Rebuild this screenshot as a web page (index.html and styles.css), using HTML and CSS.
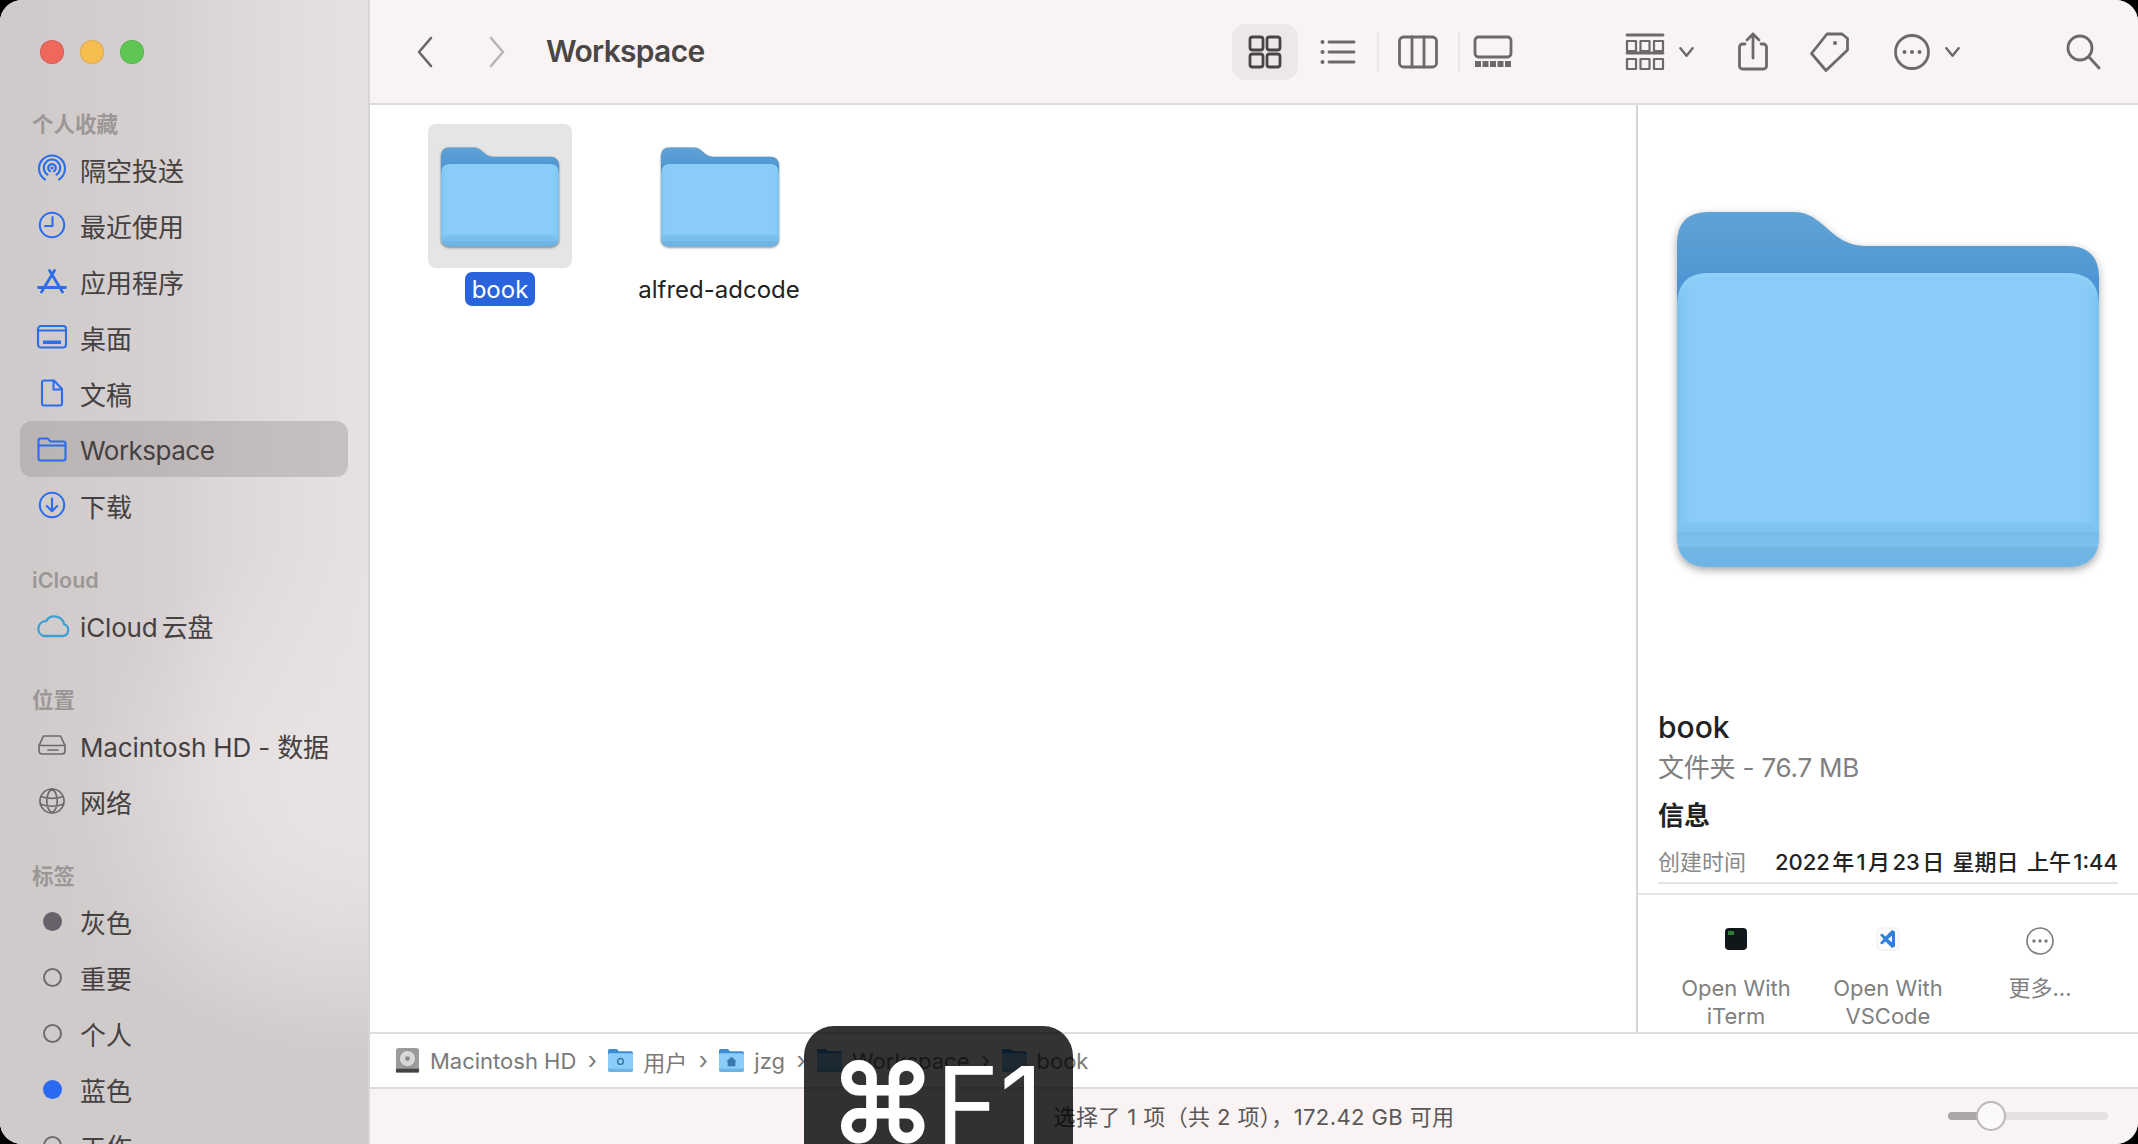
FILE: index.html
```html
<!DOCTYPE html>
<html lang="zh-CN">
<head>
<meta charset="utf-8">
<title>Workspace</title>
<link rel="stylesheet" href="styles.css">
</head>
<body>
<svg class="defs" aria-hidden="true">
  <defs>
    <linearGradient id="fb" x1="0" y1="0" x2="0" y2="1"><stop offset="0" stop-color="#5fa2d6"/><stop offset=".55" stop-color="#5199d3"/><stop offset="1" stop-color="#3a83cd"/></linearGradient>
    <linearGradient id="ff" x1="0" y1="0" x2="1" y2="0"><stop offset="0" stop-color="#7cc3f1"/><stop offset=".03" stop-color="#88ccf7"/><stop offset=".97" stop-color="#88ccf7"/><stop offset="1" stop-color="#7cc3f1"/></linearGradient>
    <linearGradient id="fl" x1="0" y1="0" x2="0" y2="1"><stop offset="0" stop-color="#80c5f0"/><stop offset=".2" stop-color="#7fc4ef"/><stop offset=".22" stop-color="#78bdea"/><stop offset=".52" stop-color="#7cc1ec"/><stop offset=".58" stop-color="#70b6e5"/><stop offset="1" stop-color="#6eb4e4"/></linearGradient>
    <symbol id="folder" viewBox="0 0 422 356">
      <path fill="url(#fb)" d="M0 110V32Q0 0 32 0H118C146 0 154 34 188 34H390Q422 34 422 66V110Z"/>
      <path fill="url(#ff)" d="M0 355V93Q0 61 32 61H390Q422 61 422 93V324Q422 355 390 355H32Q0 355 0 324Z"/>
      <path fill="#93d1f8" d="M2 88Q4 61 32 61H390Q418 61 420 88Q416 65 390 65H32Q6 65 2 88Z" opacity=".7"/>
      <path fill="url(#fl)" d="M0 311H422V324Q422 355 390 355H32Q0 355 0 324Z"/>
    </symbol>
    <symbol id="mini" viewBox="0 0 26 24">
      <path fill="#3f8bd2" d="M0 6V2Q0 0 2 0H9L11.500 2.500H24Q26 2.500 26 4.500V8H0Z"/>
      <path fill="#8acdf8" d="M0 22V6Q0 4.500 2 4.500H24Q26 4.500 26 6V22Q26 24 24 24H2Q0 24 0 22Z"/>
      <path fill="#6db3e3" d="M0 20.500H26V22Q26 24 24 24H2Q0 24 0 22Z"/>
    </symbol>
  </defs>
</svg>

<div class="window">
  <aside class="sidebar">
    <div class="lights"><i class="light red"></i><i class="light yellow"></i><i class="light green"></i></div>

    <section class="side-group first">
      <h2 class="side-head">个人收藏</h2>
      <div class="side-row"><svg class="ic blue" viewBox="0 0 30 30"><path d="M8 25.500A13 13 0 1 1 22 25.500M10.500 20.600A8.200 8.200 0 1 1 19.500 20.600M13 17.200A3.800 3.800 0 1 1 17 17.200"/><circle class="fill" cx="15" cy="14" r="1.600"/></svg><span>隔空投送</span></div>
      <div class="side-row"><svg class="ic blue" viewBox="0 0 30 30"><circle cx="15" cy="15" r="12.200"/><path d="M15.500 7V16H8"/></svg><span>最近使用</span></div>
      <div class="side-row"><svg class="ic blue thick" viewBox="0 0 30 30"><path d="M12.500 4.500L25.500 26M17.500 4.500L4.500 26M1.500 21.500H28.500"/></svg><span>应用程序</span></div>
      <div class="side-row"><svg class="ic blue" viewBox="0 0 30 30"><rect x="1" y="4" width="28" height="21.500" rx="3"/><rect class="fill" x="6" y="18.500" width="18" height="3.500"/><path d="M1 8.500H29"/></svg><span>桌面</span></div>
      <div class="side-row"><svg class="ic blue" viewBox="0 0 30 30"><path d="M7 2.500H17L25 11V25.500A2 2 0 0 1 23 27.500H7A2 2 0 0 1 5 25.500V4.500A2 2 0 0 1 7 2.500ZM16.500 3V11.500H25"/></svg><span>文稿</span></div>
      <div class="side-row selected"><svg class="ic blue" viewBox="0 0 30 30"><path d="M1.500 9V6.500A2 2 0 0 1 3.500 4.500H10.500L13.500 7.500H26.500A2 2 0 0 1 28.500 9.500V24.500A2 2 0 0 1 26.500 26.500H3.500A2 2 0 0 1 1.500 24.500ZM1.500 11.500H28.500"/></svg><span class="tight">Workspace</span></div>
      <div class="side-row"><svg class="ic blue" viewBox="0 0 30 30"><circle cx="15" cy="15" r="12.200"/><path d="M15 8.500V21M9.800 16L15 21.200L20.200 16"/></svg><span>下载</span></div>
    </section>

    <section class="side-group">
      <h2 class="side-head">iCloud</h2>
      <div class="side-row"><svg class="ic cloud" viewBox="0 0 30 30"><path d="M7 25H24.500A5.500 5.500 0 0 0 26 14.300A9 9 0 0 0 9.500 11.500A7 7 0 0 0 7 25Z"/></svg><span class="mixed closer">iCloud 云盘</span></div>
    </section>

    <section class="side-group">
      <h2 class="side-head">位置</h2>
      <div class="side-row"><svg class="ic gray" viewBox="0 0 30 30"><path d="M6.500 6H23.500L28 15.500V21A3 3 0 0 1 25 24H5A3 3 0 0 1 2 21V15.500ZM2.500 15.500H27.500M11 20H21" /></svg><span class="mixed">Macintosh HD - 数据</span></div>
      <div class="side-row"><svg class="ic gray" viewBox="0 0 30 30"><circle cx="15" cy="15" r="12"/><path d="M4 10.500C10 13 20 13 26 10.500M3.500 18C10 21 20 21 26.500 18M15 3C8 8 8 22 15 27M15 3C22 8 22 22 15 27"/></svg><span>网络</span></div>
    </section>

    <section class="side-group">
      <h2 class="side-head">标签</h2>
      <div class="side-row"><i class="dot dot-gray"></i><span>灰色</span></div>
      <div class="side-row"><i class="dot dot-open"></i><span>重要</span></div>
      <div class="side-row"><i class="dot dot-open"></i><span>个人</span></div>
      <div class="side-row"><i class="dot dot-blue"></i><span>蓝色</span></div>
      <div class="side-row"><i class="dot dot-open"></i><span>工作</span></div>
    </section>
  </aside>

  <main class="main">
    <header class="toolbar">
      <div class="tool nav"><svg class="tb" viewBox="0 0 40 40"><path d="M26 6L14 20L26 34"/></svg></div>
      <div class="tool nav next"><svg class="tb off" viewBox="0 0 40 40"><path d="M14 6L26 20L14 34"/></svg></div>
      <h1 class="title">Workspace</h1>

      <div class="tool view active"><svg class="tb dark" viewBox="0 0 40 40"><rect x="5" y="5" width="13" height="13" rx="2.500"/><rect x="22" y="5" width="13" height="13" rx="2.500"/><rect x="5" y="22" width="13" height="13" rx="2.500"/><rect x="22" y="22" width="13" height="13" rx="2.500"/></svg></div>
      <div class="tool view"><svg class="tb" viewBox="0 0 40 40"><path d="M11 10H36M11 20H36M11 30H36"/><circle class="fill" cx="4.500" cy="10" r="2"/><circle class="fill" cx="4.500" cy="20" r="2"/><circle class="fill" cx="4.500" cy="30" r="2"/></svg></div>
      <i class="sep"></i>
      <div class="tool view"><svg class="tb" viewBox="0 0 40 40"><rect x="1.500" y="5" width="37" height="30" rx="4"/><path d="M14 5V35M26 5V35"/></svg></div>
      <i class="sep sep-tight"></i>
      <div class="tool view"><svg class="tb" viewBox="0 0 40 40"><rect x="2" y="5" width="36" height="20" rx="3.500"/><path class="square" d="M2 32H38"/></svg></div>

      <div class="tool group"><svg class="tb" viewBox="0 0 40 40"><path d="M2 3H38M2 21H38"/><path class="thin" d="M2 9h9v10h-9zM15.500 9h9v10h-9zM29 9h9v10h-9zM2 27h9v10h-9zM15.500 27h9v10h-9zM29 27h9v10h-9z"/></svg><svg class="chev" viewBox="0 0 16 10"><path d="M1.500 1L8 9L14.500 1"/></svg></div>
      <div class="tool share"><svg class="tb tb-share" viewBox="6 1 28 37"><path d="M12 12H9.500A3 3 0 0 0 6.500 15V34A3 3 0 0 0 9.500 37H30.500A3 3 0 0 0 33.500 34V15A3 3 0 0 0 30.500 12H28M20 26V2M14 8L20 2L26 8"/></svg></div>
      <div class="tool tag"><svg class="tb" viewBox="0 0 40 40"><path d="M17 2H32L37.500 6.500V18L16 38.500L1.500 21.500Z"/><circle class="fill" cx="25" cy="11" r="2"/></svg></div>
      <div class="tool more"><svg class="tb" viewBox="0 0 40 40"><circle cx="20" cy="20" r="16.500"/><circle class="fill" cx="12.500" cy="20" r="2"/><circle class="fill" cx="20" cy="20" r="2"/><circle class="fill" cx="27.500" cy="20" r="2"/></svg><svg class="chev" viewBox="0 0 16 10"><path d="M1.500 1L8 9L14.500 1"/></svg></div>
      <div class="tool search"><svg class="tb" viewBox="0 0 40 40"><circle cx="17" cy="16" r="12"/><path d="M26 25L36 36"/></svg></div>
    </header>

    <div class="content">
      <div class="files">
        <div class="file selected">
          <div class="thumb"><svg class="folder-sm" viewBox="0 0 422 356"><use href="#folder"/></svg></div>
          <span class="name">book</span>
        </div>
        <div class="file">
          <div class="thumb"><svg class="folder-sm" viewBox="0 0 422 356"><use href="#folder"/></svg></div>
          <span class="name name-alt">alfred-adcode</span>
        </div>
      </div>

      <aside class="details">
        <div class="preview"><svg class="folder-lg" viewBox="0 0 422 356"><use href="#folder"/></svg></div>
        <div class="info">
          <div class="info-name">book</div>
          <div class="info-kind">文件夹 - 76.7 MB</div>
          <div class="info-head">信息</div>
          <div class="info-row"><span class="info-key">创建时间</span><span class="info-val">2022 年 1 月 23 日<span class="gap"> </span>星期日<span class="gap"> </span>上午 1:44</span></div>
        </div>
        <div class="actions">
          <div class="action">
            <svg class="act-ic" viewBox="0 0 24 24"><rect x="1" y="1" width="22" height="22" rx="4" fill="#10171a"/><rect x="4" y="4" width="6" height="4" fill="#2e7d32"/></svg>
            <span>Open With<br>iTerm</span>
          </div>
          <div class="action">
            <svg class="act-ic" viewBox="0 0 24 24"><rect x="1" y="1" width="22" height="22" rx="4" fill="#fbfbfb" stroke="#eeeeee"/><path fill="#2f80d8" d="M16 3L19 4.500V19.500L16 21L9.500 14.500L6 17.500L4 16L7.500 12L4 8L6 6.500L9.500 9.500ZM16 8.500L12 12L16 15.500Z"/></svg>
            <span>Open With<br>VSCode</span>
          </div>
          <div class="action">
            <svg class="act-ic more-ic" viewBox="0 0 28 28"><circle cx="14" cy="14" r="13" fill="none" stroke="#7d7a7a" stroke-width="1.600"/><circle cx="8" cy="14" r="1.700" fill="#7d7a7a"/><circle cx="14" cy="14" r="1.700" fill="#7d7a7a"/><circle cx="20" cy="14" r="1.700" fill="#7d7a7a"/></svg>
            <span>更多...</span>
          </div>
        </div>
      </aside>
    </div>

    <nav class="pathbar">
      <svg class="crumb-ic" viewBox="0 0 26 26"><rect x="1" y="0" width="24" height="25.500" rx="3" fill="#9c9c9c"/><circle cx="13" cy="11" r="8.500" fill="#d8d8d8" stroke="#8a8a8a"/><circle cx="13" cy="11" r="2.500" fill="#8a8a8a"/><rect x="1" y="21.500" width="24" height="4" fill="#444444"/></svg>
      <span class="crumb">Macintosh HD</span><span class="arrow">›</span>
      <svg class="crumb-ic" viewBox="0 0 26 24"><use href="#mini"/><circle cx="13" cy="13" r="3" fill="none" stroke="#3a78b0" stroke-width="1.500"/></svg>
      <span class="crumb">用户</span><span class="arrow">›</span>
      <svg class="crumb-ic" viewBox="0 0 26 24"><use href="#mini"/><path d="M13 8L18.500 13H17V18H9V13H7.500Z" fill="#3a78b0"/></svg>
      <span class="crumb">jzg</span><span class="arrow">›</span>
      <svg class="crumb-ic" viewBox="0 0 26 24"><use href="#mini"/></svg>
      <span class="crumb">Workspace</span><span class="arrow">›</span>
      <svg class="crumb-ic" viewBox="0 0 26 24"><use href="#mini"/></svg>
      <span class="crumb">book</span>
    </nav>

    <footer class="statusbar">
      <span class="status">选择了 1 项（共 2 项），172.42 GB 可用</span>
      <div class="slider"><i class="slider-fill"></i><i class="slider-knob"></i></div>
    </footer>
  </main>

  <div class="hud"><span class="hud-cmd">⌘</span><span class="hud-key">F1</span></div>
</div>
</body>
</html>
```

FILE: styles.css
```css
* { box-sizing: border-box; }
html, body { height: 100%; }
body {
  margin: 0;
  background: #000;
  overflow: hidden;
  font-family: Inter, "Noto Sans CJK SC", sans-serif;
  color: #222;
}
.defs { position: absolute; width: 0; height: 0; }

.window {
  position: relative;
  display: flex;
  width: 2138px;
  height: 1144px;
  border-radius: 22px;
  overflow: hidden;
  background: #fff;
}

/* sidebar */
.sidebar {
  flex: 0 0 370px;
  height: 1144px;
  overflow: hidden;
  padding-top: 40px;
  border-right: 2px solid #d9d5d5;
  background:
    radial-gradient(ellipse 260px 260px at 340px 800px, rgba(233,228,228,1) 0%, rgba(233,228,228,0) 100%),
    linear-gradient(180deg, rgba(208,203,203,0) 68%, #d0cbcb 90%),
    linear-gradient(90deg, #cfcaca 0%, #d6d0d0 45%, #ded7d7 62%, #e7e2e2 100%);
}
.lights { display: flex; gap: 16px; padding-left: 40px; height: 24px; }
.light { width: 24px; height: 24px; border-radius: 50%; border: 1px solid rgba(0,0,0,.1); }
.red { background: #f0675c; }
.yellow { background: #f6bd4f; }
.green { background: #5fc653; }

.side-group { margin-top: 28px; }
.side-group.first { margin-top: 41px; }
.side-head {
  margin: 0;
  height: 36px;
  padding-left: 32px;
  font-size: 21.500px;
  line-height: 38px;
  font-weight: 600;
  color: #9c9797;
}
.side-row {
  display: flex;
  align-items: center;
  gap: 13px;
  height: 56px;
  margin: 0 20px;
  padding-left: 17px;
  border-radius: 12px;
  font-size: 26px;
  color: #454141;
}
.side-row .mixed { letter-spacing: -.15px; }
.side-row .tight { letter-spacing: -.5px; padding-top: 2px; }
.side-row .closer { word-spacing: -3px; }
.side-row.selected { background: rgba(160,152,152,.45); }
.ic { flex: 0 0 30px; width: 30px; height: 30px; fill: none; stroke-width: 2.100; stroke-linecap: round; stroke-linejoin: round; overflow: visible; }
.blue { stroke: #2b6dea; }
.blue .fill { fill: #2b6dea; stroke: none; }
.thick { stroke-width: 2.800; }
.cloud { stroke: #3d9fd6; transform: scale(1.100); }
.gray { stroke: #6e6a6a; stroke-width: 1.700; }
.dot { flex: 0 0 19px; width: 19px; height: 19px; margin: 0 5.500px; border-radius: 50%; }
.dot-gray { background: #67626a; }
.dot-blue { background: #2a6af0; }
.dot-open { border: 2px solid #6f6b6b; }

/* main */
.main { position: relative; flex: 1; min-width: 0; display: flex; flex-direction: column; height: 1144px; }

.toolbar {
  display: flex;
  align-items: center;
  flex: 0 0 105px;
  padding: 0 35px;
  background: #f9f3f3;
  border-bottom: 2px solid #dedada;
}
.tool { display: flex; align-items: center; justify-content: center; height: 56px; }
.tb { flex: none; width: 40px; height: 40px; fill: none; stroke: #6e6969; stroke-width: 2.800; stroke-linecap: round; stroke-linejoin: round; overflow: visible; }
.tb .fill { fill: #6e6969; stroke: none; }
.tb .thin { stroke-width: 2.200; }
.tb .square { stroke-width: 6; stroke-dasharray: 6 1.500; stroke-linecap: butt; }
.tb.dark { stroke: #4a4545; }
.tb-share { width: 28px; height: 37px; }
.nav { width: 40px; }
.nav .tb { stroke-width: 2.600; stroke: #6a6666; }
.nav .tb.off { stroke: #bab6b6; }
.next { margin-left: 32px; }
.title {
  flex: 1;
  margin: 0 0 0 29px;
  padding-bottom: 2px;
  font-size: 30px;
  font-weight: 600;
  color: #4a4646;
  letter-spacing: -.7px;
}
.view { width: 66px; }
.view + .view { margin-left: 7px; }
.active { background: #ece8e8; border-radius: 14px; }
.sep { flex: 0 0 2px; height: 40px; margin: 0 6px; background: #eae6e6; }
.sep-tight { margin-left: 7px; margin-right: 0; }
.group { width: 80px; margin-left: 99px; gap: 14px; justify-content: flex-start; padding-left: 0; }
.chev { flex: none; width: 15px; height: 10px; fill: none; stroke: #6e6969; stroke-width: 2.600; stroke-linecap: round; stroke-linejoin: round; }
.share { width: 50px; margin-left: 23px; }
.tag { width: 50px; margin-left: 27px; }
.more { width: 72px; margin-left: 35px; gap: 13px; }
.search { width: 40px; margin-left: 101px; }

.content { flex: 1 1 0; min-height: 0; display: flex; overflow: hidden; }
.files { flex: 1; min-width: 0; display: flex; align-items: flex-start; gap: 76px; padding: 19px 0 0 58px; }
.file { display: flex; flex-direction: column; align-items: center; width: 144px; gap: 4px; }
.thumb { width: 144px; height: 144px; padding: 23px 13px 0; border-radius: 8px; }
.selected .thumb { background: #e5e5e5; }
.folder-sm { display: block; width: 118px; height: 100px; filter: drop-shadow(0 1.500px 1px rgba(0,0,0,.5)); overflow: visible; }
.name { font-size: 24px; line-height: 33px; padding: 1px 7px 0; border-radius: 7px; white-space: nowrap; color: #222; }
.name-alt { padding-right: 9px; }
.selected .name { background: #2a64dc; color: #fff; }

.details {
  flex: 0 0 502px;
  display: flex;
  flex-direction: column;
  border-left: 2px solid #d9d5d5;
  overflow: hidden;
}
.preview { flex: 0 0 602px; padding: 107px 0 0 39px; }
.folder-lg { display: block; width: 422px; height: 356px; filter: drop-shadow(0 3px 4px rgba(0,0,0,.35)); overflow: visible; }
.info { flex: none; padding: 0 20px; height: 186px; }
.info-name { font-size: 30px; line-height: 41px; font-weight: 500; color: #222; }
.info-kind { font-size: 26px; line-height: 40px; color: #808080; letter-spacing: -.2px; }
.info-head { font-size: 26px; line-height: 40px; font-weight: 700; margin-top: 8px; color: #222; }
.info-row {
  display: flex;
  justify-content: space-between;
  align-items: center;
  height: 44px;
  margin-top: 4px;
  padding-bottom: 2px;
  border-bottom: 2px solid #e4e4e4;
  font-size: 22px;
}
.info-key { color: #8a8a8a; }
.info-val { font-weight: 500; color: #222; word-spacing: -3.500px; }
.gap { margin-left: 6px; }
.actions {
  flex: 1;
  display: flex;
  padding: 32px 0 0 22px;
  border-top: 2px solid #e4e4e4;
  overflow: hidden;
}
.action {
  flex: 0 0 152px;
  display: flex;
  flex-direction: column;
  align-items: center;
  font-size: 22px;
  line-height: 28px;
  color: #808080;
  text-align: center;
}
.act-ic { width: 24px; height: 24px; margin-bottom: 23px; flex: none; }
.more-ic { width: 28px; height: 28px; margin-bottom: 19px; }

.pathbar {
  flex: 0 0 57px;
  display: flex;
  align-items: center;
  padding-left: 25px;
  background: #fff;
  border-top: 2px solid #e0dcdc;
  border-bottom: 2px solid #dedada;
  font-size: 22px;
  color: #7a7a7a;
}
.crumb-ic { flex: none; width: 25px; height: 25px; margin-right: 10px; }
.crumb { white-space: nowrap; }
.arrow { width: 32px; text-align: center; font-size: 24px; }

.statusbar {
  flex: 0 0 55px;
  position: relative;
  display: flex;
  align-items: center;
  justify-content: center;
  padding-bottom: 3px;
  background: #f9f3f3;
  font-size: 22px;
  color: #5a5757;
}
.status { letter-spacing: .4px; }
.slider {
  position: absolute;
  left: 1578px;
  top: 23px;
  width: 160px;
  height: 8px;
  border-radius: 4px;
  background: #e5e1e1;
}
.slider-fill { position: absolute; left: 0; top: 0; width: 43px; height: 8px; border-radius: 4px 0 0 4px; background: #aaa6a6; }
.slider-knob { position: absolute; left: 28px; top: -11px; width: 30px; height: 30px; border-radius: 50%; background: #fbf9f9; border: 2px solid #bbb7b7; }

.hud {
  position: absolute;
  left: 804px;
  top: 1026px;
  width: 269px;
  height: 180px;
  display: flex;
  justify-content: center;
  padding: 20px 4px 0 0;
  border-radius: 30px;
  background: rgba(0,0,0,.8);
  color: #fff;
  font-size: 108px;
  line-height: 120px;
  font-weight: 400;
}
.hud-cmd { font-family: "DejaVu Sans", sans-serif; font-size: 106px; -webkit-text-stroke: 3px #fff; }
```
